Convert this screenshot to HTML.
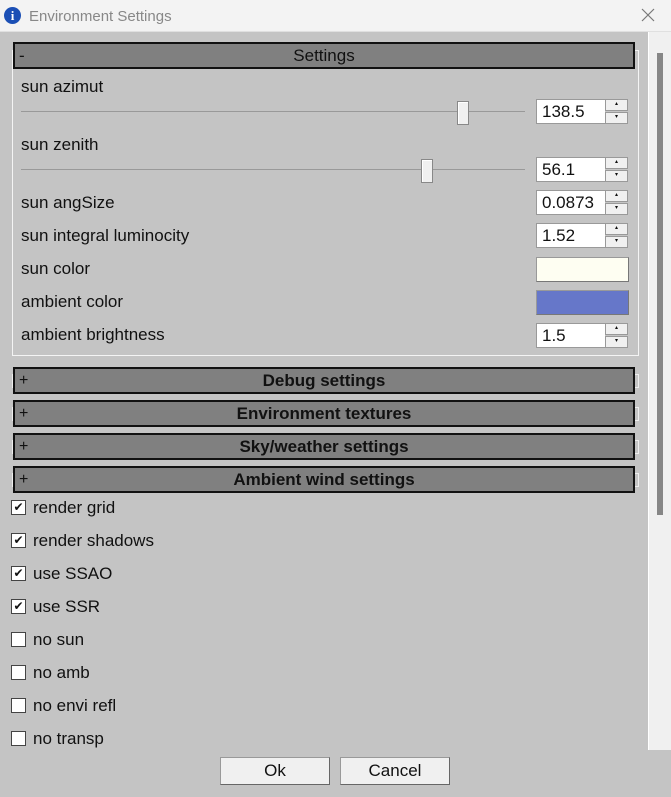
<!DOCTYPE html>
<html><head><meta charset="utf-8"><style>
*{margin:0;padding:0;box-sizing:border-box}
body{width:671px;height:797px;overflow:hidden;background:#c4c4c4;font-family:"Liberation Sans",sans-serif;font-size:17px;color:#111;position:relative}
.a{position:absolute}
.title{left:0;top:0;width:671px;height:32px;background:#f3f3f3;border-bottom:1px solid #e0e0e0}
.hdr{background:#808080;border:2px solid #111;height:27px;left:13px;width:622px;text-align:center;line-height:23px;font-size:16px}
.hdr b{font-weight:bold;font-size:17px}
.hdr span.s{position:absolute;left:4px;top:0}
.lbl{left:21px}
.spin{left:536px;width:69px;height:25px;background:#fff;border:1px solid #999;border-right:none;padding-left:5px;line-height:24px;font-size:17px}
.btns{left:605px;width:23px;height:25px}
.btns div{height:12px;background:#f0f0f0;border:1px solid #999;margin-bottom:1px;font-size:6px;text-align:center;line-height:8px}
.track{left:21px;width:504px;height:1px;background:#fff;border-top:1px solid #999}
.thumb{width:12px;height:24px;background:#f0f0f0;border:1px solid #888;box-shadow:inset 1px 1px #fff}
.cb{left:11px;width:15px;height:15px;background:#fff;border:1px solid #444;font-size:12px;line-height:13px;text-align:center}
.cl{left:33px}
.brk{width:4px;height:14px;border:1px solid #eee;border-right:none}
.brkr{width:4px;height:14px;border:1px solid #eee;border-left:none}
.btn{top:757px;width:110px;height:28px;background:#f0f0f0;border:1px solid #999;border-bottom-color:#666;border-right-color:#666;text-align:center;line-height:26px;font-size:17px}
</style></head><body>
<div class="a title"></div>
<div class="a" style="left:4px;top:7px;width:17px;height:17px;border-radius:50%;background:#1b4fb5;color:#fff;font:bold 13px 'Liberation Serif',serif;text-align:center;line-height:17px">i</div>
<div class="a" style="left:29px;top:8px;color:#888;font-size:15px">Environment Settings</div>
<svg class="a" style="left:641px;top:8px" width="14" height="14"><path d="M1 1L13 13M13 1L1 13" stroke="#777" stroke-width="1.2"/></svg>
<div class="a" style="left:648px;top:32px;width:23px;height:718px;background:#f0f0f0;border-left:1px solid #fff"></div>
<div class="a" style="left:657px;top:53px;width:6px;height:462px;background:#868686"></div>

<div class="a" style="left:12px;top:50px;width:627px;height:306px;border:1px solid #f4f4f4"></div>
<div class="a hdr" style="top:42px;font-size:17px"><span class="s">-</span>Settings</div>

<div class="a lbl" style="top:77px">sun azimut</div>
<div class="a track" style="top:111px"></div>
<div class="a thumb" style="left:457px;top:101px"></div>
<div class="a spin" style="top:99px">138.5</div>
<div class="a btns" style="top:99px"><div>▴</div><div>▾</div></div>

<div class="a lbl" style="top:135px">sun zenith</div>
<div class="a track" style="top:169px"></div>
<div class="a thumb" style="left:421px;top:159px"></div>
<div class="a spin" style="top:157px">56.1</div>
<div class="a btns" style="top:157px"><div>▴</div><div>▾</div></div>

<div class="a lbl" style="top:193px">sun angSize</div>
<div class="a spin" style="top:190px">0.0873</div>
<div class="a btns" style="top:190px"><div>▴</div><div>▾</div></div>

<div class="a lbl" style="top:226px">sun integral luminocity</div>
<div class="a spin" style="top:223px">1.52</div>
<div class="a btns" style="top:223px"><div>▴</div><div>▾</div></div>

<div class="a lbl" style="top:259px">sun color</div>
<div class="a" style="left:536px;top:257px;width:93px;height:25px;background:#fefef2;border:1px solid #999;border-right-color:#777;border-bottom-color:#777"></div>
<div class="a lbl" style="top:292px">ambient color</div>
<div class="a" style="left:536px;top:290px;width:93px;height:25px;background:#6677c9;border:1px solid #999;border-right-color:#777;border-bottom-color:#777"></div>

<div class="a lbl" style="top:325px">ambient brightness</div>
<div class="a spin" style="top:323px">1.5</div>
<div class="a btns" style="top:323px"><div>▴</div><div>▾</div></div>

<div class="a brk" style="left:12px;top:374px"></div><div class="a brkr" style="left:635px;top:374px"></div>
<div class="a hdr" style="top:367px"><span class="s">+</span><b>Debug settings</b></div>
<div class="a brk" style="left:12px;top:407px"></div><div class="a brkr" style="left:635px;top:407px"></div>
<div class="a hdr" style="top:400px"><span class="s">+</span><b>Environment textures</b></div>
<div class="a brk" style="left:12px;top:440px"></div><div class="a brkr" style="left:635px;top:440px"></div>
<div class="a hdr" style="top:433px"><span class="s">+</span><b>Sky/weather settings</b></div>
<div class="a brk" style="left:12px;top:473px"></div><div class="a brkr" style="left:635px;top:473px"></div>
<div class="a hdr" style="top:466px"><span class="s">+</span><b>Ambient wind settings</b></div>

<div class="a cb" style="top:500px">✔</div><div class="a cl" style="top:498px">render grid</div>
<div class="a cb" style="top:533px">✔</div><div class="a cl" style="top:531px">render shadows</div>
<div class="a cb" style="top:566px">✔</div><div class="a cl" style="top:564px">use SSAO</div>
<div class="a cb" style="top:599px">✔</div><div class="a cl" style="top:597px">use SSR</div>
<div class="a cb" style="top:632px"></div><div class="a cl" style="top:630px">no sun</div>
<div class="a cb" style="top:665px"></div><div class="a cl" style="top:663px">no amb</div>
<div class="a cb" style="top:698px"></div><div class="a cl" style="top:696px">no envi refl</div>
<div class="a cb" style="top:731px"></div><div class="a cl" style="top:729px">no transp</div>

<div class="a btn" style="left:220px">Ok</div>
<div class="a btn" style="left:340px">Cancel</div>
</body></html>
